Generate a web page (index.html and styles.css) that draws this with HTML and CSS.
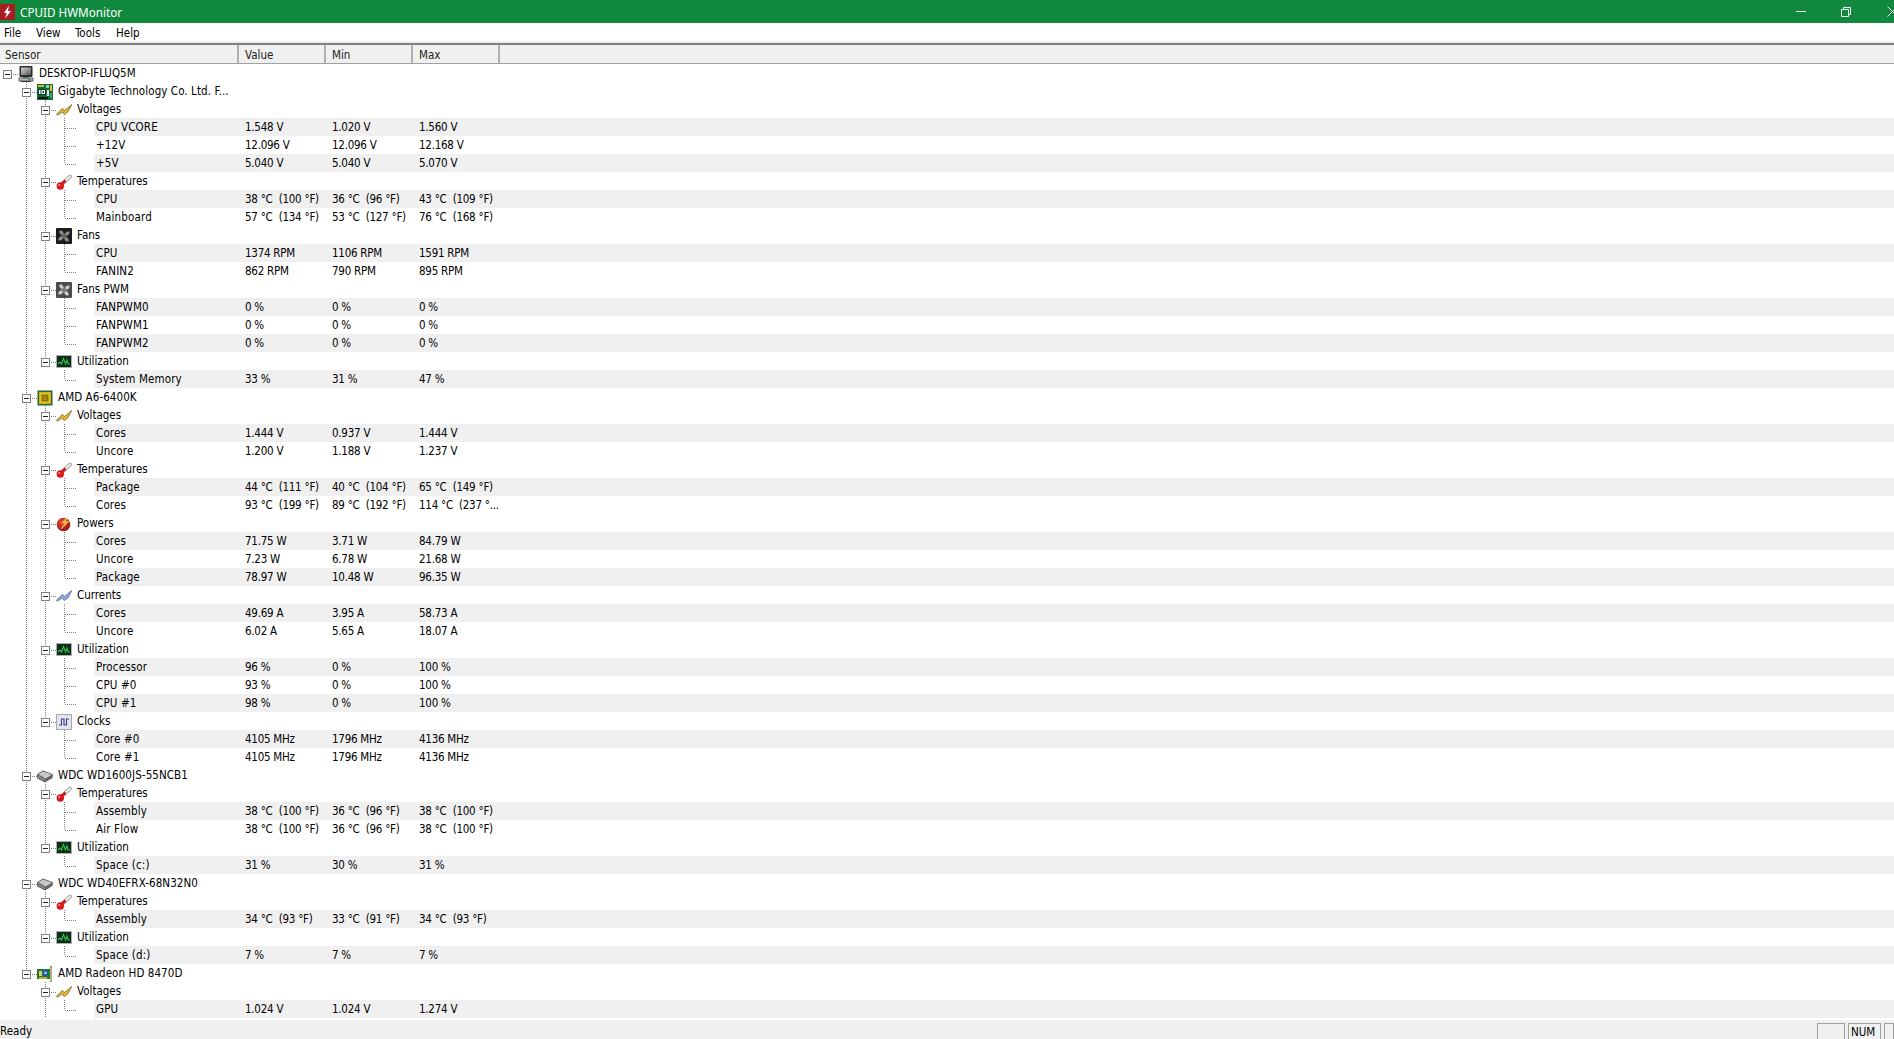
FILE: index.html
```html
<!DOCTYPE html>
<html lang="en">
<head>
<meta charset="utf-8">
<title>CPUID HWMonitor</title>
<link rel="stylesheet" href="styles.css">
</head>
<body>
<svg class="defs" aria-hidden="true">
  <defs>
    <linearGradient id="scr" x1="0" y1="0" x2="1" y2="1"><stop offset="0" stop-color="#d8d8d8"/><stop offset="1" stop-color="#555"/></linearGradient>
    <radialGradient id="red" cx=".4" cy=".35" r=".7"><stop offset="0" stop-color="#f05030"/><stop offset="1" stop-color="#8c1010"/></radialGradient>
    <symbol id="i-pc" viewBox="0 0 16 16"><rect x="1.5" y="0" width="13" height="11" rx="1" fill="#2c2c2c"/><rect x="3" y="1.5" width="10" height="7.5" fill="url(#scr)"/><rect x="5" y="11" width="6" height="1" fill="#777"/><rect x="1" y="12" width="14" height="3" fill="#b8b8b8" stroke="#333" stroke-width=".7"/><rect x="3" y="15" width="10" height="1" fill="#333"/><rect x="10" y="13" width="3" height="1" fill="#3a9a4a"/></symbol>
    <symbol id="i-board" viewBox="0 0 16 16"><rect width="16" height="16" fill="#136b3c"/><rect x="1" y="1" width="6" height="2" fill="#c9b83a"/><rect x="9" y="1" width="3" height="3" fill="#9ad0a0"/><rect x="13" y="1" width="2" height="6" fill="#d8c04a"/><rect x="1" y="5" width="8" height="6" fill="#0c3d24"/><rect x="2" y="6" width="1.5" height="4" fill="#fff"/><rect x="4.5" y="6" width="3.5" height="4" fill="#fff"/><rect x="5.5" y="7" width="1.5" height="2" fill="#0c3d24"/><rect x="10" y="6" width="2" height="6" fill="#e0e0e0"/><rect x="13" y="9" width="2" height="5" fill="#4aa070"/><rect x="1" y="13" width="10" height="2" fill="#111"/></symbol>
    <symbol id="i-volt" viewBox="0 0 16 16"><path d="M.3 12.500 6.500 6.200l1.600 2.600L15.700 2.500 12 9.800 8.200 12.600 6.600 10 1.500 13Z" fill="#eeb41e" stroke="#7d7458" stroke-width=".9" stroke-linejoin="round"/></symbol>
    <symbol id="i-temp" viewBox="0 0 16 16"><path d="M14 2.500 6.500 9.500" stroke="#a8a8a8" stroke-width="3.800" stroke-linecap="round"/><path d="M14 2.500 6.500 9.500" stroke="#f0f0f0" stroke-width="1.800" stroke-linecap="round"/><path d="M9.500 6.500 5.500 10.500" stroke="#d81818" stroke-width="2.600"/><circle cx="4.300" cy="12" r="3.700" fill="#d81820"/><circle cx="3.300" cy="11" r="1" fill="#f7a0a0"/></symbol>
    <symbol id="i-fan" viewBox="0 0 16 16"><rect width="16" height="16" rx="1" fill="#1c1c1c"/><path d="M8 8C4 7 3 5 3.500 2.500 6 2 8 3.500 8 8ZM8 8C9 4 11 3 13.500 3.500 14 6 12.500 8 8 8ZM8 8c4 1 5 3 4.500 5.500C10 14 8 12.500 8 8ZM8 8c-1 4-3 5-5.500 4.500C2 10 3.500 8 8 8Z" fill="#8c8c8c"/><circle cx="8" cy="8" r="2.500" fill="#666"/></symbol>
    <symbol id="i-pwm" viewBox="0 0 16 16"><rect width="16" height="16" rx="1" fill="#4c4c4c"/><path d="M8 8C4 7 3 5 3.500 2.500 6 2 8 3.500 8 8ZM8 8C9 4 11 3 13.500 3.500 14 6 12.500 8 8 8ZM8 8c4 1 5 3 4.500 5.500C10 14 8 12.500 8 8ZM8 8c-1 4-3 5-5.500 4.500C2 10 3.500 8 8 8Z" fill="#cfcfcf"/><circle cx="8" cy="8" r="2.500" fill="#808080"/></symbol>
    <symbol id="i-util" viewBox="0 0 16 16"><rect x=".5" y="1.500" width="15" height="12" fill="#0c2c18" stroke="#b0b0b0"/><path d="M2 10 4 8l1.500 2L7.500 4.500 9.500 10l1.500-4 1.200 4H14" fill="none" stroke="#35c050" stroke-width="1.100"/></symbol>
    <symbol id="i-cpu" viewBox="0 0 16 16"><rect width="15" height="15" x=".5" y=".5" fill="#1f6a33"/><rect x="2" y="2" width="12" height="12" fill="#e0c020" stroke="#7a6a10" stroke-width=".6" stroke-dasharray="1 1"/><rect x="5" y="5" width="6" height="6" fill="#a88410" stroke="#5a4a08" stroke-width=".6"/></symbol>
    <symbol id="i-power" viewBox="0 0 16 16"><circle cx="7.500" cy="8.500" r="6.800" fill="url(#red)"/><path d="M12 0 6 7h3L5 13l8-7.500H9.500Z" fill="#f2b520" stroke="#fff2c0" stroke-width=".4"/></symbol>
    <symbol id="i-amps" viewBox="0 0 16 16"><path d="M.3 12.500 6.500 6.200l1.600 2.600L15.700 2.500 12 9.800 8.200 12.600 6.600 10 1.500 13Z" fill="#8fabe4" stroke="#667696" stroke-width=".9" stroke-linejoin="round"/></symbol>
    <symbol id="i-clock" viewBox="0 0 16 16"><rect x=".5" y=".5" width="15" height="15" fill="#e4e4ea" stroke="#a8a8b0"/><path d="M3 11h2.500V5H8v6h2.500V5H13" fill="none" stroke="#3a3a9a" stroke-width="1.100"/></symbol>
    <symbol id="i-hdd" viewBox="0 0 16 16"><path d="M0 6.500 6 2.500l10 4-.5 3.500L8 14.500 .5 10.500Z" fill="#666"/><path d="M.5 6.500 6 3l9.500 3.500L8.500 11Z" fill="#c8c8c8" stroke="#555" stroke-width=".6"/><path d="M.5 6.500 8.500 11v3L.8 10.200Z" fill="#8a8a8a" stroke="#444" stroke-width=".5"/></symbol>
    <symbol id="i-gpu" viewBox="0 0 16 16"><rect x="0" y="3" width="13" height="10" fill="#1d7a3c"/><rect x="2" y="5" width="3" height="5" fill="#d8d060"/><rect x="6" y="4.500" width="5" height="5" fill="#2a5ac0"/><rect x="7.500" y="6" width="2" height="2" fill="#bfe0ff"/><rect x="2" y="11" width="8" height="2" fill="#c8b030"/><rect x="13" y="0" width="2" height="16" fill="#8a8a8a"/><rect x="13.500" y="1" width="1" height="14" fill="#e8d060"/></symbol>
  </defs>
</svg>

<header class="titlebar">
  <svg class="appicon" viewBox="0 0 15 16"><rect width="15" height="16" fill="#a71d22"/><path d="M9 1.500 4 9h2.800L5 14.500 11 7H8Z" fill="#fff"/></svg>
  <span class="apptitle">CPUID HWMonitor</span>
  <div class="winbtns">
    <svg class="btn-min" viewBox="0 0 10 1"><rect width="10" height="1" fill="#fff"/></svg>
    <svg class="btn-max" viewBox="0 0 10 10"><path d="M.5 2.500h7v7h-7ZM2.500 2.500v-2h7v7h-2" fill="none" stroke="#fff"/></svg>
    <svg class="btn-close" viewBox="0 0 7 11"><path d="M.5.500 10.500 10.500M10.500.500.500 10.500" fill="none" stroke="#fff"/></svg>
  </div>
</header>

<nav class="menubar">
  <span class="menu m-file">File</span><span class="menu m-view">View</span><span class="menu m-tools">Tools</span><span class="menu">Help</span>
</nav>

<div class="colhead">
  <div class="col first">Sensor</div><div class="col">Value</div><div class="col">Min</div><div class="col">Max</div><div class="col rest"></div>
</div>

<main class="tree">
  <div class="row l0"><div class="head"><i class="twist"></i><svg class="ico"><use href="#i-pc"/></svg><span>DESKTOP-IFLUQ5M</span></div></div>

  <div class="node n1">
    <div class="row l1 has"><div class="head"><i class="twist"></i><svg class="ico"><use href="#i-board"/></svg><span>Gigabyte Technology Co. Ltd. F...</span></div></div>
    <div class="node n2">
      <div class="row l2 has"><div class="head"><i class="twist"></i><svg class="ico"><use href="#i-volt"/></svg><span>Voltages</span></div></div>
      <div class="node n3 alt"><div class="row l3"><div class="name">CPU VCORE</div><div class="val">1.548 V</div><div class="val">1.020 V</div><div class="val">1.560 V</div></div></div>
      <div class="node n3"><div class="row l3"><div class="name">+12V</div><div class="val">12.096 V</div><div class="val">12.096 V</div><div class="val">12.168 V</div></div></div>
      <div class="node n3 alt"><div class="row l3"><div class="name">+5V</div><div class="val">5.040 V</div><div class="val">5.040 V</div><div class="val">5.070 V</div></div></div>
    </div>
    <div class="node n2">
      <div class="row l2 has"><div class="head"><i class="twist"></i><svg class="ico"><use href="#i-temp"/></svg><span>Temperatures</span></div></div>
      <div class="node n3 alt"><div class="row l3"><div class="name">CPU</div><div class="val">38 °C  (100 °F)</div><div class="val">36 °C  (96 °F)</div><div class="val">43 °C  (109 °F)</div></div></div>
      <div class="node n3"><div class="row l3"><div class="name">Mainboard</div><div class="val">57 °C  (134 °F)</div><div class="val">53 °C  (127 °F)</div><div class="val">76 °C  (168 °F)</div></div></div>
    </div>
    <div class="node n2">
      <div class="row l2 has"><div class="head"><i class="twist"></i><svg class="ico"><use href="#i-fan"/></svg><span>Fans</span></div></div>
      <div class="node n3 alt"><div class="row l3"><div class="name">CPU</div><div class="val">1374 RPM</div><div class="val">1106 RPM</div><div class="val">1591 RPM</div></div></div>
      <div class="node n3"><div class="row l3"><div class="name">FANIN2</div><div class="val">862 RPM</div><div class="val">790 RPM</div><div class="val">895 RPM</div></div></div>
    </div>
    <div class="node n2">
      <div class="row l2 has"><div class="head"><i class="twist"></i><svg class="ico"><use href="#i-pwm"/></svg><span>Fans PWM</span></div></div>
      <div class="node n3 alt"><div class="row l3"><div class="name">FANPWM0</div><div class="val">0 %</div><div class="val">0 %</div><div class="val">0 %</div></div></div>
      <div class="node n3"><div class="row l3"><div class="name">FANPWM1</div><div class="val">0 %</div><div class="val">0 %</div><div class="val">0 %</div></div></div>
      <div class="node n3 alt"><div class="row l3"><div class="name">FANPWM2</div><div class="val">0 %</div><div class="val">0 %</div><div class="val">0 %</div></div></div>
    </div>
    <div class="node n2">
      <div class="row l2 has"><div class="head"><i class="twist"></i><svg class="ico"><use href="#i-util"/></svg><span>Utilization</span></div></div>
      <div class="node n3 alt"><div class="row l3"><div class="name">System Memory</div><div class="val">33 %</div><div class="val">31 %</div><div class="val">47 %</div></div></div>
    </div>
  </div>

  <div class="node n1">
    <div class="row l1 has"><div class="head"><i class="twist"></i><svg class="ico"><use href="#i-cpu"/></svg><span>AMD A6-6400K</span></div></div>
    <div class="node n2">
      <div class="row l2 has"><div class="head"><i class="twist"></i><svg class="ico"><use href="#i-volt"/></svg><span>Voltages</span></div></div>
      <div class="node n3 alt"><div class="row l3"><div class="name">Cores</div><div class="val">1.444 V</div><div class="val">0.937 V</div><div class="val">1.444 V</div></div></div>
      <div class="node n3"><div class="row l3"><div class="name">Uncore</div><div class="val">1.200 V</div><div class="val">1.188 V</div><div class="val">1.237 V</div></div></div>
    </div>
    <div class="node n2">
      <div class="row l2 has"><div class="head"><i class="twist"></i><svg class="ico"><use href="#i-temp"/></svg><span>Temperatures</span></div></div>
      <div class="node n3 alt"><div class="row l3"><div class="name">Package</div><div class="val">44 °C  (111 °F)</div><div class="val">40 °C  (104 °F)</div><div class="val">65 °C  (149 °F)</div></div></div>
      <div class="node n3"><div class="row l3"><div class="name">Cores</div><div class="val">93 °C  (199 °F)</div><div class="val">89 °C  (192 °F)</div><div class="val">114 °C  (237 °...</div></div></div>
    </div>
    <div class="node n2">
      <div class="row l2 has"><div class="head"><i class="twist"></i><svg class="ico"><use href="#i-power"/></svg><span>Powers</span></div></div>
      <div class="node n3 alt"><div class="row l3"><div class="name">Cores</div><div class="val">71.75 W</div><div class="val">3.71 W</div><div class="val">84.79 W</div></div></div>
      <div class="node n3"><div class="row l3"><div class="name">Uncore</div><div class="val">7.23 W</div><div class="val">6.78 W</div><div class="val">21.68 W</div></div></div>
      <div class="node n3 alt"><div class="row l3"><div class="name">Package</div><div class="val">78.97 W</div><div class="val">10.48 W</div><div class="val">96.35 W</div></div></div>
    </div>
    <div class="node n2">
      <div class="row l2 has"><div class="head"><i class="twist"></i><svg class="ico"><use href="#i-amps"/></svg><span>Currents</span></div></div>
      <div class="node n3 alt"><div class="row l3"><div class="name">Cores</div><div class="val">49.69 A</div><div class="val">3.95 A</div><div class="val">58.73 A</div></div></div>
      <div class="node n3"><div class="row l3"><div class="name">Uncore</div><div class="val">6.02 A</div><div class="val">5.65 A</div><div class="val">18.07 A</div></div></div>
    </div>
    <div class="node n2">
      <div class="row l2 has"><div class="head"><i class="twist"></i><svg class="ico"><use href="#i-util"/></svg><span>Utilization</span></div></div>
      <div class="node n3 alt"><div class="row l3"><div class="name">Processor</div><div class="val">96 %</div><div class="val">0 %</div><div class="val">100 %</div></div></div>
      <div class="node n3"><div class="row l3"><div class="name">CPU #0</div><div class="val">93 %</div><div class="val">0 %</div><div class="val">100 %</div></div></div>
      <div class="node n3 alt"><div class="row l3"><div class="name">CPU #1</div><div class="val">98 %</div><div class="val">0 %</div><div class="val">100 %</div></div></div>
    </div>
    <div class="node n2">
      <div class="row l2 has"><div class="head"><i class="twist"></i><svg class="ico"><use href="#i-clock"/></svg><span>Clocks</span></div></div>
      <div class="node n3 alt"><div class="row l3"><div class="name">Core #0</div><div class="val">4105 MHz</div><div class="val">1796 MHz</div><div class="val">4136 MHz</div></div></div>
      <div class="node n3"><div class="row l3"><div class="name">Core #1</div><div class="val">4105 MHz</div><div class="val">1796 MHz</div><div class="val">4136 MHz</div></div></div>
    </div>
  </div>

  <div class="node n1">
    <div class="row l1 has"><div class="head"><i class="twist"></i><svg class="ico"><use href="#i-hdd"/></svg><span>WDC WD1600JS-55NCB1</span></div></div>
    <div class="node n2">
      <div class="row l2 has"><div class="head"><i class="twist"></i><svg class="ico"><use href="#i-temp"/></svg><span>Temperatures</span></div></div>
      <div class="node n3 alt"><div class="row l3"><div class="name">Assembly</div><div class="val">38 °C  (100 °F)</div><div class="val">36 °C  (96 °F)</div><div class="val">38 °C  (100 °F)</div></div></div>
      <div class="node n3"><div class="row l3"><div class="name">Air Flow</div><div class="val">38 °C  (100 °F)</div><div class="val">36 °C  (96 °F)</div><div class="val">38 °C  (100 °F)</div></div></div>
    </div>
    <div class="node n2">
      <div class="row l2 has"><div class="head"><i class="twist"></i><svg class="ico"><use href="#i-util"/></svg><span>Utilization</span></div></div>
      <div class="node n3 alt"><div class="row l3"><div class="name">Space (c:)</div><div class="val">31 %</div><div class="val">30 %</div><div class="val">31 %</div></div></div>
    </div>
  </div>

  <div class="node n1">
    <div class="row l1 has"><div class="head"><i class="twist"></i><svg class="ico"><use href="#i-hdd"/></svg><span>WDC WD40EFRX-68N32N0</span></div></div>
    <div class="node n2">
      <div class="row l2 has"><div class="head"><i class="twist"></i><svg class="ico"><use href="#i-temp"/></svg><span>Temperatures</span></div></div>
      <div class="node n3 alt"><div class="row l3"><div class="name">Assembly</div><div class="val">34 °C  (93 °F)</div><div class="val">33 °C  (91 °F)</div><div class="val">34 °C  (93 °F)</div></div></div>
    </div>
    <div class="node n2">
      <div class="row l2 has"><div class="head"><i class="twist"></i><svg class="ico"><use href="#i-util"/></svg><span>Utilization</span></div></div>
      <div class="node n3 alt"><div class="row l3"><div class="name">Space (d:)</div><div class="val">7 %</div><div class="val">7 %</div><div class="val">7 %</div></div></div>
    </div>
  </div>

  <div class="node n1">
    <div class="row l1 has"><div class="head"><i class="twist"></i><svg class="ico"><use href="#i-gpu"/></svg><span>AMD Radeon HD 8470D</span></div></div>
    <div class="node n2 more">
      <div class="row l2 has"><div class="head"><i class="twist"></i><svg class="ico"><use href="#i-volt"/></svg><span>Voltages</span></div></div>
      <div class="node n3 alt"><div class="row l3"><div class="name">GPU</div><div class="val">1.024 V</div><div class="val">1.024 V</div><div class="val">1.274 V</div></div></div>
    </div>
  </div>
</main>

<footer class="statusbar">
  <span class="ready">Ready</span>
  <span class="pane p1"></span><span class="pane p2">NUM</span><span class="pane p3"></span>
</footer>
</body>
</html>
```
FILE: styles.css
```css
* { box-sizing: border-box; }

html, body { height: 100%; }

body {
  margin: 0;
  overflow: hidden;
  display: flex;
  flex-direction: column;
  background: #fff;
  color: #000;
  font-family: "DejaVu Sans", "Noto Sans", sans-serif;
  font-stretch: condensed;
  font-size: 11.500px;
  line-height: 18px;
}

.defs { width: 0; height: 0; position: absolute; }

/* Title bar */
.titlebar {
  flex: none;
  height: 23px;
  display: flex;
  align-items: center;
  background: #10893e;
  color: #fff;
}
.appicon { width: 15px; height: 16px; flex: none; }
.apptitle {
  margin-left: 5px;
  font-family: "Noto Sans", sans-serif;
  font-stretch: normal;
  font-size: 11.700px;
}
.winbtns { margin-left: auto; display: flex; align-items: center; height: 10px; }
.winbtns svg { display: block; flex: none; }
.btn-min { width: 10px; height: 1px; margin-right: 35px; }
.btn-max { width: 10px; height: 10px; margin-right: 36px; }
.btn-close { width: 7px; height: 11px; }

/* Menu */
.menubar {
  flex: none;
  height: 22px;
  padding: 1px 0 3px 4px;
  display: flex;
  background: #fff;
  border-bottom: 2px solid #808080;
  box-shadow: inset 0 -2px 0 #f0f0f0;
}
.m-file { width: 32px; }
.m-view { width: 39px; }
.m-tools { width: 41px; }

/* Column header */
.colhead {
  flex: none;
  height: 19px;
  padding-top: 1px;
  display: flex;
  background: #f0f0f0;
  border-bottom: 1px solid #a0a0a0;
}
.col {
  width: 87px;
  padding-left: 6px;
  border-right: 2px solid #b0b0b0;
  color: #222;
  margin-top: -1px;
  line-height: 20px;
}
.col.first { width: 239px; padding-left: 5px; }
.col.rest { flex: 1; border-right: 0; }

/* Tree */
.tree { flex: 1; min-height: 0; overflow: hidden; }

.row {
  position: relative;
  height: 18px;
  display: grid;
  grid-template-columns: 238px 87px 87px 87px;
  white-space: pre;
}
.head { display: flex; align-items: center; }
.twist {
  position: relative;
  flex: none;
  width: 9px;
  height: 9px;
  margin: 3px 6px 0 0;
  border: 1px solid #808080;
  background: linear-gradient(#222, #222) center / 5px 1px no-repeat #fff;
  z-index: 1;
}
.twist::after {
  content: "";
  position: absolute;
  left: 7px;
  top: 3px;
  width: 7px;
  height: 1px;
  background: repeating-linear-gradient(to right, #808080 0 1px, transparent 1px 2px);
}
.ico { flex: none; width: 16px; height: 16px; margin: 2px 5px 0 0; position: relative; z-index: 1; }

.l0 .head { padding-left: 3px; }
.l1 .head { padding-left: 22px; }
.l2 .head { padding-left: 41px; }
.l1 .head span { letter-spacing: .08px; }

.name { padding-left: 96px; letter-spacing: .15px; }
.val { padding-left: 7px; letter-spacing: -.25px; }

/* Guides: each node draws its own stretch of the line its parent owns */
.node { position: relative; }
.node::before {
  content: "";
  position: absolute;
  top: 0;
  bottom: 0;
  width: 1px;
  background: repeating-linear-gradient(#808080 0 1px, transparent 1px 2px);
}
.node:last-child::before { bottom: auto; height: 10px; }
.node.more::before { bottom: 0; height: auto; }
.n1::before { left: 26px; }
.n2::before { left: 45px; }
.n3::before { left: 64px; }

/* Horizontal stub in front of each sensor name */
.l3::after {
  content: "";
  position: absolute;
  left: 65px;
  top: 10px;
  width: 11px;
  height: 1px;
  background: repeating-linear-gradient(to right, #808080 0 1px, transparent 1px 2px);
}
.alt > .row { background: linear-gradient(to right, transparent 94px, #f0f0f0 94px); }

/* Status bar */
.statusbar {
  flex: none;
  height: 19px;
  display: flex;
  align-items: flex-end;
  background: #f0f0f0;
  overflow: hidden;
  white-space: nowrap;
}
.ready { margin: 2px auto 0 0; align-self: flex-start; line-height: 19px; }
.pane {
  flex: none;
  height: 16px;
  line-height: 17px;
  border: 1px solid #a0a0a0;
  border-bottom: 0;
  padding-left: 2px;
}
.p1 { width: 28px; margin-right: 3px; }
.p2 { width: 33px; margin-right: 3px; }
.p3 { width: 10px; }
```
